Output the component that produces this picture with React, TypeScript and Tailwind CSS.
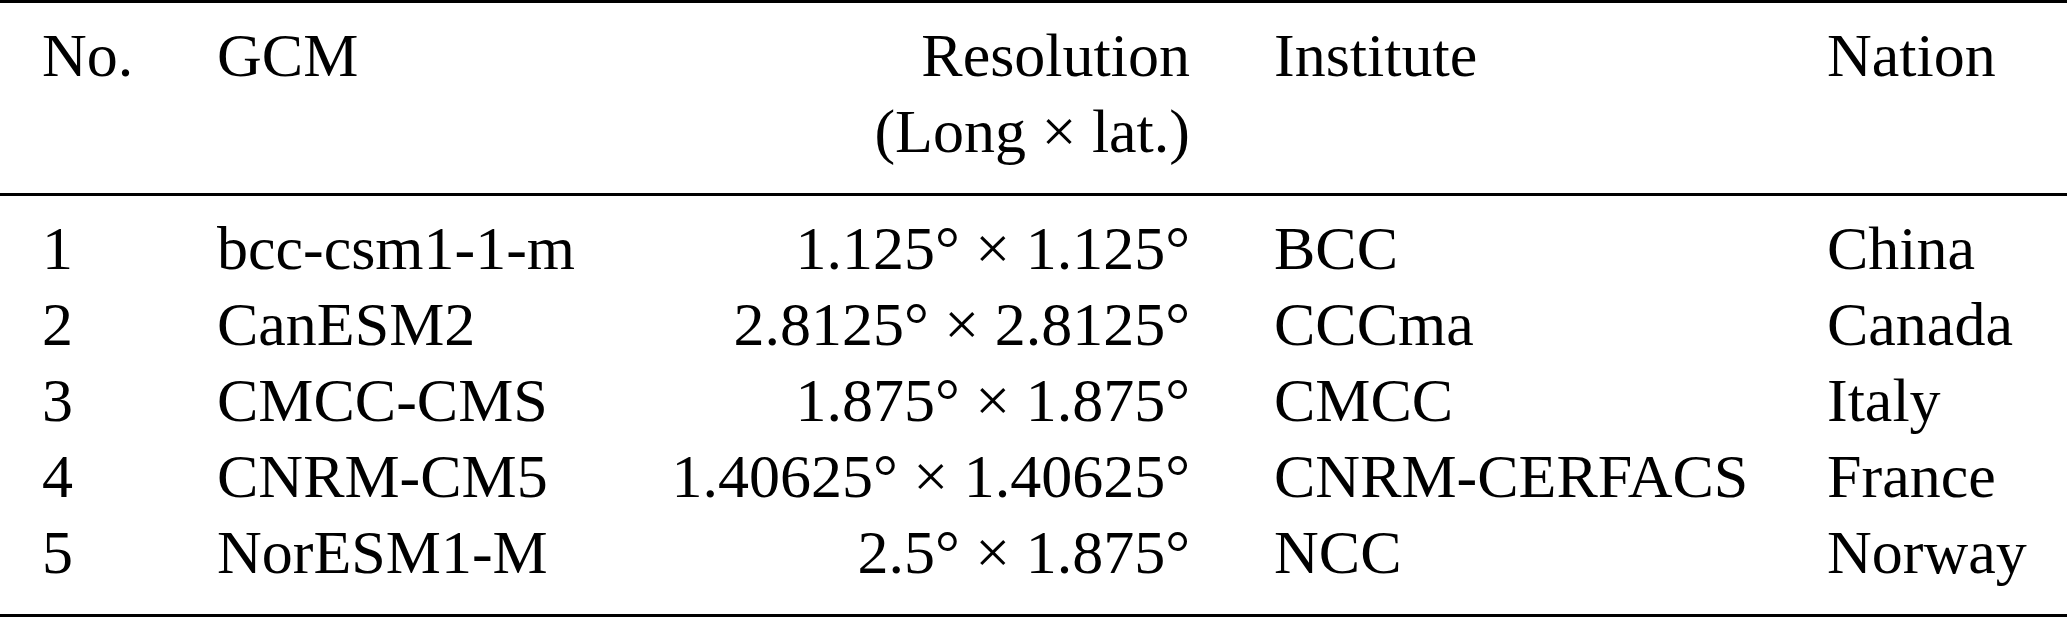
const rows = [
  { no: "1", gcm: "bcc-csm1-1-m", res: "1.125° × 1.125°", inst: "BCC", nation: "China" },
  { no: "2", gcm: "CanESM2", res: "2.8125° × 2.8125°", inst: "CCCma", nation: "Canada" },
  { no: "3", gcm: "CMCC-CMS", res: "1.875° × 1.875°", inst: "CMCC", nation: "Italy" },
  { no: "4", gcm: "CNRM-CM5", res: "1.40625° × 1.40625°", inst: "CNRM-CERFACS", nation: "France" },
  { no: "5", gcm: "NorESM1-M", res: "2.5° × 1.875°", inst: "NCC", nation: "Norway" },
];

const grid = "grid grid-cols-[175px_440px_617px_553px_282px]";

export default function App() {
  return (
    <div className="w-[2067px] bg-white text-black font-['Liberation_Serif','Times_New_Roman',serif] text-[62px] leading-[76px] whitespace-nowrap">
      {/* header */}
      <div className={`${grid} border-t-[3px] border-b-[3px] border-black pt-[14px] pb-[24px]`}>
        <div className="pl-[42px]">No.</div>
        <div className="pl-[42px]">GCM</div>
        <div className="pr-[42px] text-right">
          <div>Resolution</div>
          <div>(Long × lat.)</div>
        </div>
        <div className="pl-[42px]">Institute</div>
        <div className="pl-[42px]">Nation</div>
      </div>

      {/* body */}
      <div className={`${grid} border-b-[3px] border-black pt-[14px] pb-[24px]`}>
        {rows.map((r) => (
          <div key={r.no} className="contents">
            <div className="pl-[42px]">{r.no}</div>
            <div className="pl-[42px]">{r.gcm}</div>
            <div className="pr-[42px] text-right">{r.res}</div>
            <div className="pl-[42px]">{r.inst}</div>
            <div className="pl-[42px]">{r.nation}</div>
          </div>
        ))}
      </div>
    </div>
  );
}
